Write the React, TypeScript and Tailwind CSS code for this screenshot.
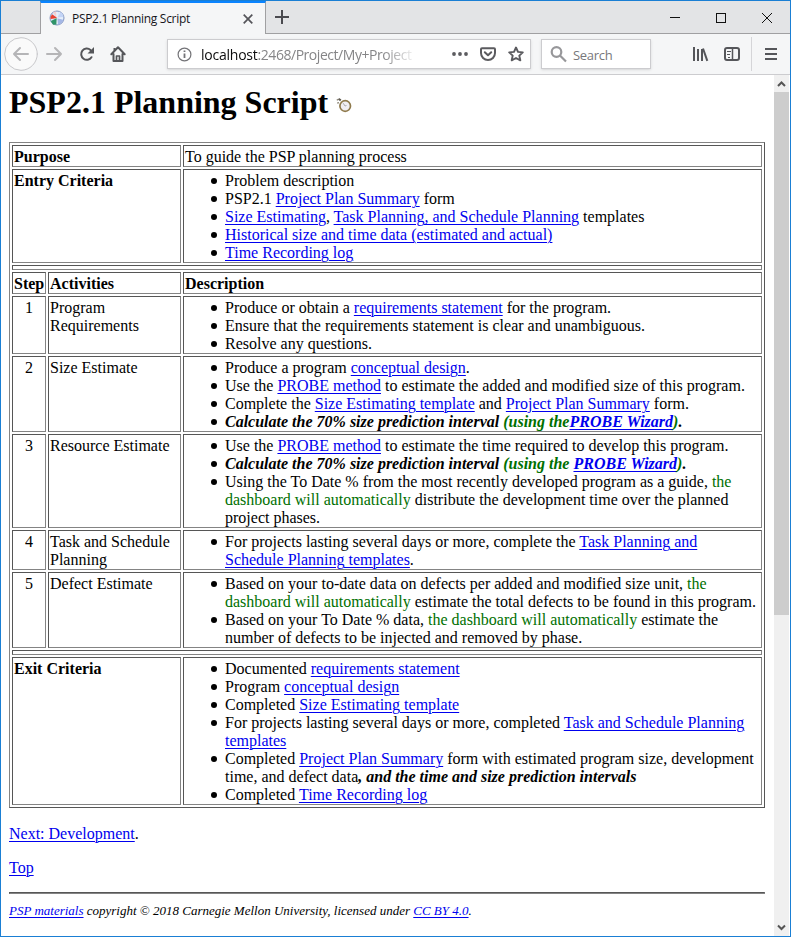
import type { ReactNode } from "react";

const A = ({ children }: { children: ReactNode }) => (
  <a className="text-[#0000ee] underline underline-offset-2 decoration-1">{children}</a>
);
const G = ({ children }: { children: ReactNode }) => <span className="text-[#007000]">{children}</span>;
const BI = ({ children }: { children: ReactNode }) => <b className="italic">{children}</b>;

const edge =
  "border border-t-[#565656] border-l-[#565656] border-b-[#848484] border-r-[#848484] px-px pt-[2px] pb-0 align-top ";

function Bullets({ items }: { items: ReactNode[] }) {
  return (
    <ul className="pl-10">
      {items.map((item, i) => (
        <li
          key={i}
          className="whitespace-nowrap before:-ml-[14px] before:mr-[8px] before:mb-[2px] before:inline-block before:size-[6px] before:rounded-full before:bg-black before:content-['']"
        >
          {item}
        </li>
      ))}
    </ul>
  );
}

function Step({ n, name, height, items }: { n: ReactNode; name: ReactNode; height: string; items: ReactNode[] }) {
  return (
    <tr className={height}>
      <td className={edge + "text-center"}>{n}</td>
      <td className={edge}>{name}</td>
      <td className={edge}>
        <Bullets items={items} />
      </td>
    </tr>
  );
}

const Gap = () => (
  <tr className="h-[5px]">
    <td colSpan={3} className={edge + "text-[0px] leading-[0px]"} />
  </tr>
);

function TabBar() {
  return (
    <div className="flex h-[33px] shrink-0 bg-[#e3e4e6]">
      <div className="w-[39px] border-b border-[#a0a0a2]" />
      <div className="flex w-[226px] items-center border-x border-t-2 border-x-[#a0a0a2] border-t-[#0a84ff] bg-[#f5f6f7] pl-[8px]">
        <svg width="16" height="16" viewBox="0 0 16 16" className="mb-px">
          <circle cx="8" cy="8" r="7" fill="#dbe8fa" stroke="#8295c0" />
          <path d="M8 8L12 2A7 7 0 0 1 14.5 7Z" fill="#c3d4f6" />
          <path d="M8 8L14.3 10A7 7 0 0 1 9 14.5Z" fill="#a3b6e6" />
          <path d="M8 8L4 2.5A7 7 0 0 1 7 1.5Z" fill="#f3cfd2" />
          <path d="M8.5 8L3 4.2A6.5 6.5 0 0 0 1.6 9Z" fill="#e8402f" />
          <path d="M8 8L1.8 11L4 14.8L7.5 14.5Z" fill="#2f9468" />
          <path d="M8 2V14M8 8H14" stroke="#fff" strokeWidth=".6" />
        </svg>
        <span className="ml-[7px] w-[171px] whitespace-nowrap font-['Open_Sans',sans-serif] text-[12px] leading-4 tracking-[-0.3px] text-[#15151b]">
          PSP2.1 Planning Script
        </span>
        <svg width="10" height="10" viewBox="0 0 10 10" fill="none" stroke="#55555a" strokeWidth="1.7">
          <path d="M.7.7L9.3 9.3M9.3.7L.7 9.3" />
        </svg>
      </div>
      <div className="flex flex-1 items-center border-b border-[#a0a0a2]">
        <svg width="14" height="14" viewBox="0 0 14 14" className="ml-[9px]" stroke="#4a4a4f" strokeWidth="2">
          <path d="M7 0V14M0 7H14" />
        </svg>
        <svg width="104" height="12" viewBox="0 0 104 12" className="ml-auto mr-[18px] mt-[2px]" fill="none" stroke="#111" strokeWidth="1">
          <path d="M2 5.5H12" />
          <rect x="48.5" y="1.5" width="9" height="9" />
          <path d="M94 1L104 11M104 1L94 11" />
        </svg>
      </div>
    </div>
  );
}

function ToolBar() {
  return (
    <div className="flex h-[41px] shrink-0 items-center border-b border-[#cccccf] bg-[#f5f6f7] font-['Open_Sans',sans-serif]">
      <svg width="132" height="40" viewBox="1 34 132 40" fill="none" stroke="#55565a" strokeWidth="2" strokeLinecap="round" strokeLinejoin="round">
        <circle cx="21" cy="54" r="16.3" fill="#fafafa" stroke="#c8c8cb" strokeWidth="1" />
        <path d="M28 54H14M20 48L14 54L20 60" stroke="#b5b5b7" />
        <path d="M47 54H61M55 48L61 54L55 60" stroke="#b5b5b7" />
        <path d="M91.5 57.2A5.6 5.6 0 1 1 90.5 50" />
        <path d="M94 47V53.4H87.5Z" fill="#55565a" stroke="none" />
        <path d="M111.3 54.3L118 47.3L124.7 54.3M113.5 54V61H122.5V54" />
        <path d="M114.5 48V50.5" strokeLinecap="butt" />
        <path d="M116.5 61V56H119.5V61" strokeWidth="1.7" />
      </svg>
      <div className="ml-[34px] flex h-[30px] w-[364px] items-center border border-[#cccccf] bg-white pl-[9px] shadow-sm">
        <svg width="15" height="15" viewBox="0 0 15 15" fill="none" stroke="#737377" className="shrink-0">
          <circle cx="7.5" cy="7.5" r="6.4" strokeWidth="1.2" />
          <path d="M7.5 6.5V11M7.5 3.5V5" strokeWidth="1.8" />
        </svg>
        <div className="ml-[9px] w-[216px] shrink-0 whitespace-nowrap pt-px text-[14px] leading-5 tracking-[-0.46px] text-[#858587] [mask-image:linear-gradient(to_right,black_84%,transparent_100%)]">
          <span className="tracking-[-0.23px] text-[#0c0c0d]">localhost</span>:2468/Project/My+Project
        </div>
        <svg width="76" height="20" viewBox="450 44 76 20" className="ml-[33px] shrink-0" fill="none" stroke="#5b5b5f" strokeWidth="2" strokeLinejoin="round" strokeLinecap="round">
          <g fill="#5b5b5f" stroke="none">
            <circle cx="454" cy="54" r="1.9" />
            <circle cx="460" cy="54" r="1.9" />
            <circle cx="466" cy="54" r="1.9" />
          </g>
          <path d="M482 48.3H494Q495 48.3 495 49.3V53A7 7 0 0 1 481 53V49.3Q481 48.3 482 48.3ZM484.8 52.3L488 55.3L491.2 52.3" />
          <path d="M516 47.5L518 51.9L522.8 52.4L519.3 55.6L520.3 60.3L516 58L511.7 60.3L512.7 55.6L509.2 52.4L514 51.9Z" strokeWidth="1.9" />
        </svg>
      </div>
      <div className="ml-[10px] flex h-[30px] w-[110px] items-center border border-[#cccccf] bg-white pl-[8px] shadow-sm">
        <svg width="17" height="17" viewBox="0 0 17 17" fill="none" stroke="#97979a" strokeWidth="2.2">
          <circle cx="6.5" cy="6" r="4.8" />
          <path d="M10 9.5L16 15.5" />
        </svg>
        <span className="ml-[6px] pt-px text-[13px] leading-5 tracking-[-0.3px] text-[#77777b]">Search</span>
      </div>
      <svg width="139" height="40" viewBox="651 34 139 40" fill="none" stroke="#55565a" strokeWidth="2">
        <path d="M694 47V61M698 49V61M702 49V61" />
        <path d="M703 48.5L707.3 60.8" />
        <rect x="725" y="48" width="14" height="12" rx="2" />
        <path d="M732.5 48V60" strokeWidth="1.5" />
        <path d="M727 51.5H731M727 54.5H730M728 57.5H730" strokeWidth="1" />
        <path d="M751.5 37V71" stroke="#d5d5d8" strokeWidth="1" />
        <path d="M765 49H777M765 54H777M765 59H777" />
      </svg>
    </div>
  );
}

export default function App() {
  return (
    <div className="flex h-[937px] w-[791px] flex-col overflow-hidden border border-[#1a7fd4] bg-white">
      <TabBar />
      <ToolBar />
      <div className="flex min-h-0 flex-1">
        <main className="w-[773px] pl-2 pt-[9px] font-['Liberation_Serif',serif] text-[16px] leading-[18px] text-black">
          <h1 className="flex h-[37px] items-center text-[32px] font-bold leading-[37px]">
            <span>PSP2.1 Planning Script</span>
            <svg width="16" height="16" viewBox="0 0 16 16" className="ml-[8px] mt-[5px]" fill="none">
              <circle cx="9.2" cy="9" r="5.3" fill="#f1eef3" stroke="#8f7a4c" strokeWidth="1.7" />
              <path d="M9 9L7.2 6.2M9 9L10.5 8.5" stroke="#999" strokeWidth=".8" />
              <path d="M2.5 1.8L4.8 3.4" stroke="#5f5a50" strokeWidth="2" />
              <path d="M.8 3.2L2 2.4M1.2 6.2L3 5.6" stroke="#8b8577" strokeWidth="1.3" />
            </svg>
          </h1>
          <table className="mt-[21px] w-[756px] table-fixed border-separate border-spacing-[2px] border border-b-[#565656] border-l-[#848484] border-r-[#565656] border-t-[#848484]">
            <colgroup>
              <col className="w-[34px]" />
              <col className="w-[133px]" />
              <col className="w-[579px]" />
            </colgroup>
            <tbody>
              <tr className="h-[22px]">
                <td colSpan={2} className={edge + "font-bold"}>Purpose</td>
                <td className={edge}>To guide the PSP planning process</td>
              </tr>
              <tr className="h-[94px]">
                <td colSpan={2} className={edge + "font-bold"}>Entry Criteria</td>
                <td className={edge}>
                  <Bullets
                    items={[
                      "Problem description",
                      <>PSP2.1 <A>Project Plan Summary</A> form</>,
                      <><A>Size Estimating</A>, <A>Task Planning, and Schedule Planning</A> templates</>,
                      <A>Historical size and time data (estimated and actual)</A>,
                      <A>Time Recording log</A>,
                    ]}
                  />
                </td>
              </tr>
              <Gap />
              <tr className="h-[22px] font-bold">
                <td className={edge + "whitespace-nowrap"}>Step</td>
                <td className={edge}>Activities</td>
                <td className={edge}>Description</td>
              </tr>
              <Step
                n="1"
                name={<>Program<br />Requirements</>}
                height="h-[58px]"
                items={[
                  <>Produce or obtain a <A>requirements statement</A> for the program.</>,
                  "Ensure that the requirements statement is clear and unambiguous.",
                  "Resolve any questions.",
                ]}
              />
              <Step
                n="2"
                name="Size Estimate"
                height="h-[76px]"
                items={[
                  <>Produce a program <A>conceptual design</A>.</>,
                  <>Use the <A>PROBE method</A> to estimate the added and modified size of this program.</>,
                  <>Complete the <A>Size Estimating template</A> and <A>Project Plan Summary</A> form.</>,
                  <BI>Calculate the 70% size prediction interval <G>(using the</G><A>PROBE Wizard</A><G>)</G>.</BI>,
                ]}
              />
              <Step
                n="3"
                name="Resource Estimate"
                height="h-[94px]"
                items={[
                  <>Use the <A>PROBE method</A> to estimate the time required to develop this program.</>,
                  <BI>Calculate the 70% size prediction interval <G>(using the <A>PROBE Wizard</A>)</G>.</BI>,
                  <>
                    Using the To Date % from the most recently developed program as a guide, <G>the<br />
                    dashboard will automatically</G> distribute the development time over the planned<br />
                    project phases.
                  </>,
                ]}
              />
              <Step
                n="4"
                name={<>Task and Schedule<br />Planning</>}
                height="h-[40px]"
                items={[
                  <>For projects lasting several days or more, complete the <A>Task Planning and<br />Schedule Planning templates</A>.</>,
                ]}
              />
              <Step
                n="5"
                name="Defect Estimate"
                height="h-[76px]"
                items={[
                  <>
                    Based on your to-date data on defects per added and modified size unit, <G>the<br />
                    dashboard will automatically</G> estimate the total defects to be found in this program.
                  </>,
                  <>
                    Based on your To Date % data, <G>the dashboard will automatically</G> estimate the<br />
                    number of defects to be injected and removed by phase.
                  </>,
                ]}
              />
              <Gap />
              <tr className="h-[148px]">
                <td colSpan={2} className={edge + "font-bold"}>Exit Criteria</td>
                <td className={edge}>
                  <Bullets
                    items={[
                      <>Documented <A>requirements statement</A></>,
                      <>Program <A>conceptual design</A></>,
                      <>Completed <A>Size Estimating template</A></>,
                      <>For projects lasting several days or more, completed <A>Task and Schedule Planning<br />templates</A></>,
                      <>
                        Completed <A>Project Plan Summary</A> form with estimated program size, development<br />
                        time, and defect data<BI>, and the time and size prediction intervals</BI>
                      </>,
                      <>Completed <A>Time Recording log</A></>,
                    ]}
                  />
                </td>
              </tr>
            </tbody>
          </table>
          <p className="mt-[17px]"><A>Next: Development</A>.</p>
          <p className="mt-4"><A>Top</A></p>
          <hr className="mt-[15px] h-[2px] w-[756px] border border-b-[#848484] border-l-[#565656] border-r-[#848484] border-t-[#565656]" />
          <p className="mt-[8px] text-[13px] italic leading-[18px]">
            <A>PSP materials</A> copyright © 2018 Carnegie Mellon University, licensed under <A>CC BY 4.0</A>.
          </p>
        </main>
        <aside className="flex w-[15px] flex-col items-center bg-[#f0f0f0]">
          <svg width="15" height="17" viewBox="0 0 15 17" fill="none" stroke="#555" strokeWidth="2">
            <path d="M4 11L7.5 7.5L11 11" />
          </svg>
          <div className="h-[523px] w-full bg-[#cdcdcd]" />
          <svg width="15" height="17" viewBox="0 0 15 17" className="mt-auto" fill="none" stroke="#555" strokeWidth="2">
            <path d="M4 6.5L7.5 10L11 6.5" />
          </svg>
        </aside>
      </div>
    </div>
  );
}
